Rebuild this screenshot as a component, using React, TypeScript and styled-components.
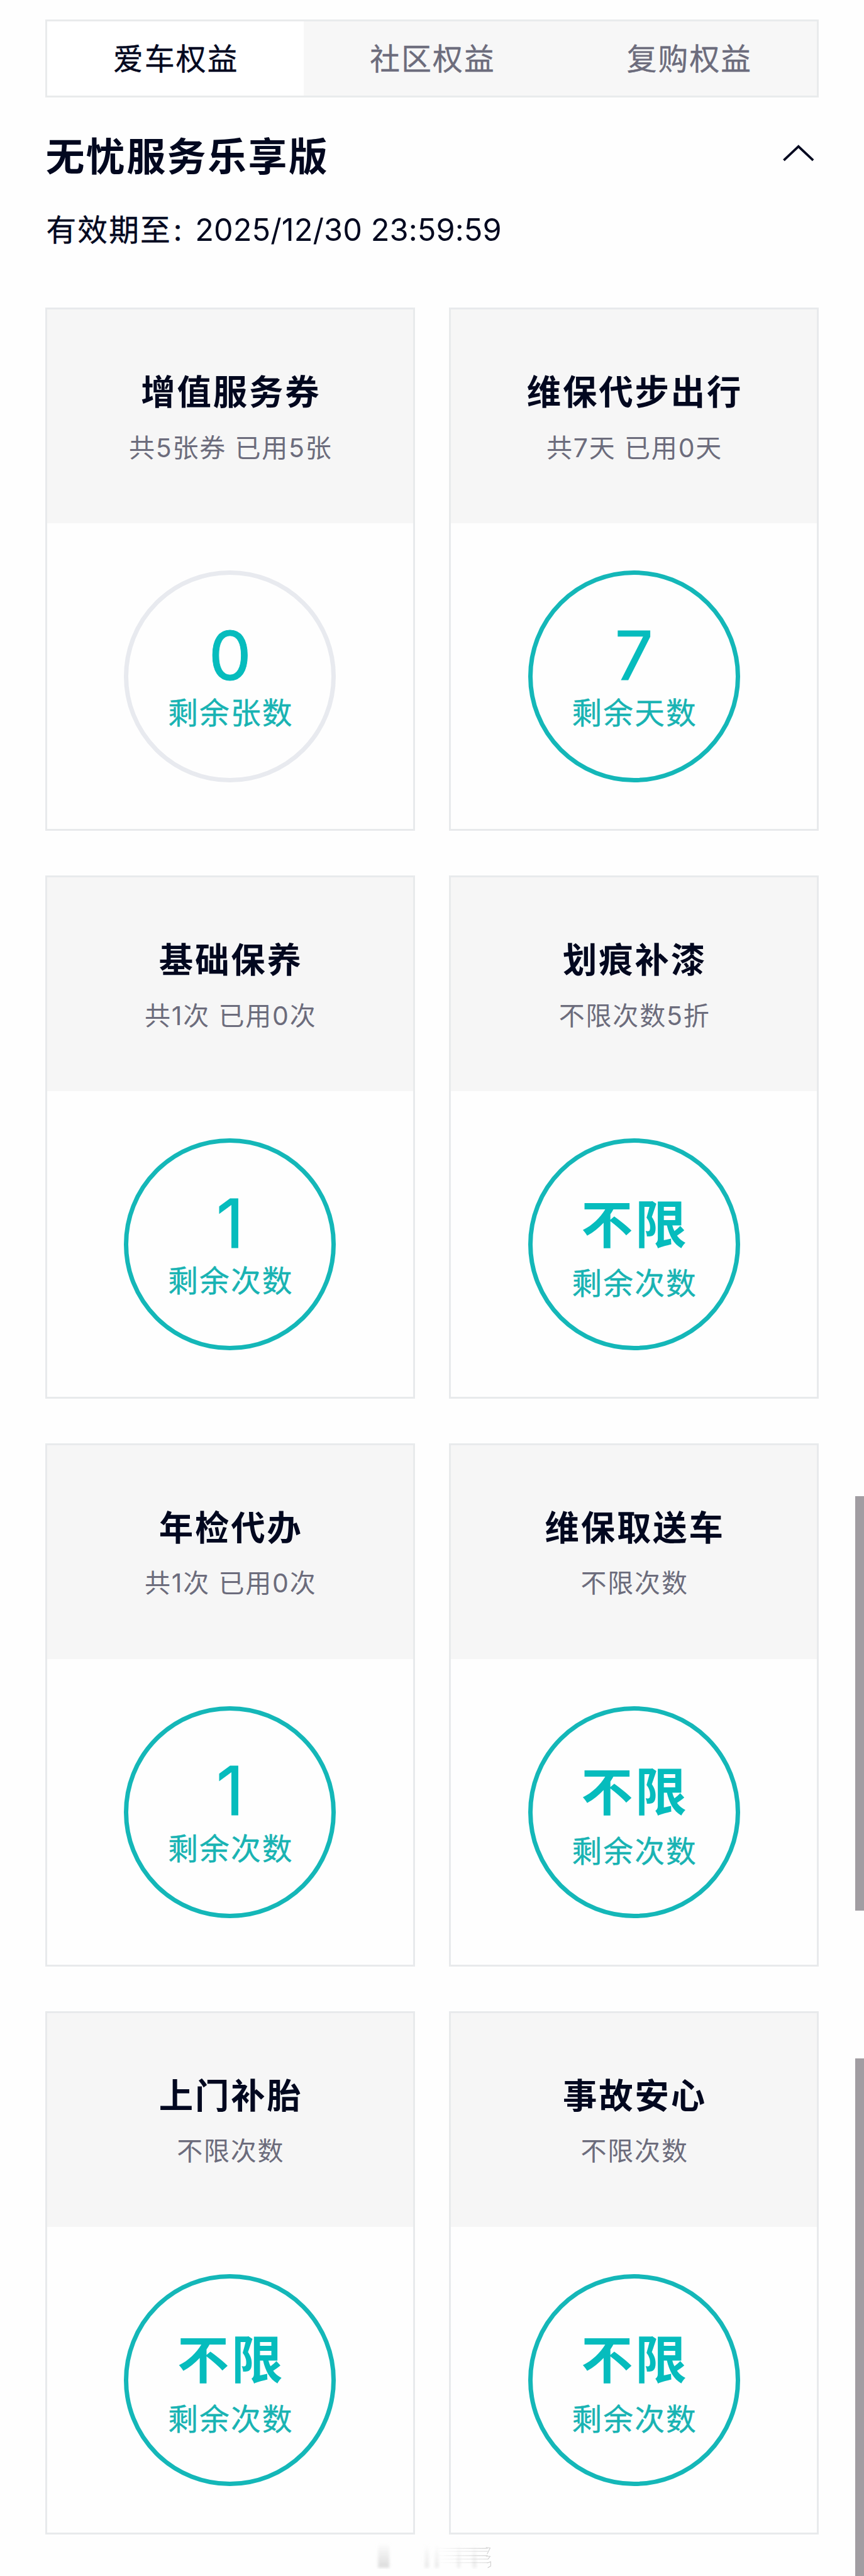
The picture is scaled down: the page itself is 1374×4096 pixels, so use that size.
import React from 'react'
import styled, { createGlobalStyle } from 'styled-components'

// sizes are written for a 1440px wide layout
const u = (n: number) => `${(n * 0.954).toFixed(2)}px`

interface Benefit {
  title: string
  note: string
  value: string
  label: string
  empty?: boolean
}

const tabs = ['爱车权益', '社区权益', '复购权益']

const benefits: Benefit[] = [
  { title: '增值服务券', note: '共5张券 已用5张', value: '0', label: '剩余张数', empty: true },
  { title: '维保代步出行', note: '共7天 已用0天', value: '7', label: '剩余天数' },
  { title: '基础保养', note: '共1次 已用0次', value: '1', label: '剩余次数' },
  { title: '划痕补漆', note: '不限次数5折', value: '不限', label: '剩余次数' },
  { title: '年检代办', note: '共1次 已用0次', value: '1', label: '剩余次数' },
  { title: '维保取送车', note: '不限次数', value: '不限', label: '剩余次数' },
  { title: '上门补胎', note: '不限次数', value: '不限', label: '剩余次数' },
  { title: '事故安心', note: '不限次数', value: '不限', label: '剩余次数' },
]

const BenefitCard: React.FC<{ benefit: Benefit }> = ({ benefit }) => {
  const { title, note, value, label, empty } = benefit
  const isNumber = /^\d+$/.test(value)

  return (
    <Card>
      <CardHeader>
        <CardTitle>{title}</CardTitle>
        <CardNote>{note}</CardNote>
      </CardHeader>
      <CardBody>
        <Ring $empty={empty}>
          {isNumber ? <Count>{value}</Count> : <Unlimited>{value}</Unlimited>}
          <RingLabel>{label}</RingLabel>
        </Ring>
      </CardBody>
    </Card>
  )
}

const Watermark: React.FC = () => (
  <WatermarkSvg viewBox='0 0 210 48'>
    <defs>
      <linearGradient id='fade' x1='0' y1='0' x2='0' y2='1'>
        <stop offset='0' stopColor='#dcdcdc' stopOpacity='0' />
        <stop offset='1' stopColor='#dcdcdc' />
      </linearGradient>
      <linearGradient id='side' x1='0' y1='0' x2='1' y2='0'>
        <stop offset='0' stopColor='#c4c4c4' stopOpacity='0' />
        <stop offset='1' stopColor='#c4c4c4' />
      </linearGradient>
      <filter id='soft'>
        <feGaussianBlur stdDeviation='2' />
      </filter>
    </defs>
    <g fill='url(#fade)' filter='url(#soft)'>
      <rect x='20' y='4' width='19' height='41' />
      <rect x='98' y='6' width='7' height='39' opacity='0.6' />
      <rect x='115' y='6' width='6' height='39' opacity='0.6' />
      <rect x='152' y='6' width='5' height='39' opacity='0.6' />
      <rect x='178' y='6' width='6' height='39' opacity='0.6' />
    </g>
    <g fill='url(#side)' opacity='0.7'>
      <rect x='118' y='12' width='85' height='1.5' />
      <rect x='118' y='17' width='85' height='1' />
      <rect x='118' y='24' width='85' height='1.5' />
      <rect x='118' y='30' width='85' height='1' />
      <rect x='118' y='36' width='85' height='1' />
    </g>
    <path
      d='M200 11l7 1-5 10M200 26h7l-4 5M202 37l6-2v7l-5 3'
      fill='none'
      stroke='#d2d2d2'
      strokeWidth='1.2'
    />
  </WatermarkSvg>
)

const App: React.FC = () => {
  return (
    <>
      <GlobalStyle />
      <Page>
        <Tabs>
          {tabs.map((tab, i) => (
            <Tab key={tab} $active={i === 0}>
              {tab}
            </Tab>
          ))}
        </Tabs>
        <PlanHeader>
          <PlanTitle>无忧服务乐享版</PlanTitle>
          <Chevron viewBox='0 0 52 28'>
            <path d='M1.5 26L26 3l24.5 23' fill='none' stroke='#02081f' strokeWidth='4' />
          </Chevron>
        </PlanHeader>
        <Expiry>
          有效期至<Colon>:</Colon>
          <ExpiryDate>2025/12/30 23:59:59</ExpiryDate>
        </Expiry>
        <Grid>
          {benefits.map((benefit) => (
            <BenefitCard key={benefit.title} benefit={benefit} />
          ))}
        </Grid>
        <Watermark />
        <ScrollThumb $top={2494} $height={691} />
        <ScrollThumb $top={3431} $height={863} />
      </Page>
    </>
  )
}

export default App

const GlobalStyle = createGlobalStyle`
  * {
    box-sizing: border-box;
  }
  body {
    margin: 0;
    background: #fefefe;
    color: #02081f;
    font-family: Inter, 'Noto Sans CJK SC', sans-serif;
  }
`

const Page = styled.main`
  position: relative;
  width: 1374px;
  height: 4096px;
  overflow: hidden;
  padding: ${u(32)} ${u(75)} 0;
`

const Tabs = styled.nav`
  display: flex;
  height: ${u(130)};
  border: 3px solid #e9ebec;
`

const Tab = styled.div<{ $active: boolean }>`
  flex: 1;
  display: flex;
  align-items: center;
  justify-content: center;
  padding: ${u(5)} 0 0 ${u(2.3)};
  background: ${({ $active }) => ($active ? '#fff' : '#f7f7f7')};
  color: ${({ $active }) => ($active ? '#02081f' : '#6c6c7c')};
  font-size: ${u(50)};
  line-height: 1;
  letter-spacing: ${u(2.3)};
  -webkit-text-stroke: 0.4px;
`

const PlanHeader = styled.div`
  display: flex;
  align-items: center;
  justify-content: space-between;
  height: ${u(80)};
  margin-top: ${u(60)};
  padding: 0 ${u(8)} 0 ${u(1)};
`

const PlanTitle = styled.h1`
  margin: 0;
  font-size: ${u(65)};
  line-height: ${u(80)};
  font-weight: 700;
  letter-spacing: ${u(2.5)};
`

const Chevron = styled.svg`
  width: ${u(52)};
  height: ${u(28)};
  margin-bottom: ${u(14)};
`

const Expiry = styled.div`
  display: flex;
  align-items: baseline;
  height: ${u(60)};
  margin-top: ${u(51)};
  padding-left: ${u(2)};
  font-size: ${u(50)};
  line-height: ${u(60)};
  letter-spacing: ${u(2.3)};
  -webkit-text-stroke: 0.4px;
`

const Colon = styled.span`
  width: ${u(39)};
  padding-left: ${u(3)};
`

const ExpiryDate = styled.span`
  font-size: ${u(51)};
  letter-spacing: 0.1px;
  -webkit-text-stroke: 0;
`

const Grid = styled.section`
  display: grid;
  grid-template-columns: repeat(2, ${u(617)});
  justify-content: space-between;
  row-gap: ${u(74.5)};
  margin-top: ${u(100)};
`

const Card = styled.article`
  height: ${u(872)};
  border: 3px solid #e8eaec;
`

const CardHeader = styled.header`
  display: flex;
  flex-direction: column;
  align-items: center;
  height: ${u(356)};
  padding-top: ${u(100.5)};
  background: #f6f6f6;
`

const CardTitle = styled.h2`
  margin: 0;
  padding-left: ${u(3)};
  font-size: ${u(57)};
  line-height: ${u(74)};
  font-weight: 700;
  letter-spacing: ${u(3)};
`

const CardNote = styled.div`
  margin-top: ${u(26)};
  padding-left: ${u(2)};
  color: #6c6c7c;
  font-size: ${u(43)};
  line-height: ${u(60)};
  letter-spacing: ${u(1.9)};
`

const CardBody = styled.div`
  display: flex;
  justify-content: center;
  padding-top: ${u(79)};
`

const Ring = styled.div<{ $empty?: boolean }>`
  display: flex;
  flex-direction: column;
  align-items: center;
  width: ${u(353)};
  height: ${u(353)};
  padding-top: ${u(70.5)};
  border: 7px solid ${({ $empty }) => ($empty ? '#e8eaef' : '#14b7b8')};
  border-radius: 50%;
  color: #18b3b3;
`

const Count = styled.strong`
  height: ${u(127)};
  color: #06bcbd;
  font-size: ${u(113)};
  line-height: ${u(127)};
  font-weight: 400;
  -webkit-text-stroke: 1px;
`

const Unlimited = styled.strong`
  height: ${u(132)};
  padding-left: ${u(4)};
  color: #06bcbd;
  font-size: ${u(86)};
  line-height: ${u(132)};
  font-weight: 700;
  letter-spacing: ${u(4)};
`

const RingLabel = styled.span`
  padding-left: ${u(2.3)};
  font-size: ${u(50)};
  line-height: ${u(66)};
  letter-spacing: ${u(2.3)};
  -webkit-text-stroke: 0.4px;
`

const WatermarkSvg = styled.svg`
  display: block;
  width: ${u(210)};
  height: ${u(48)};
  margin: ${u(10)} 0 0 ${u(535)};
`

const ScrollThumb = styled.div<{ $top: number; $height: number }>`
  position: absolute;
  right: 0;
  top: ${({ $top }) => u($top)};
  width: ${u(15)};
  height: ${({ $height }) => u($height)};
  background: #a19da2;
`
